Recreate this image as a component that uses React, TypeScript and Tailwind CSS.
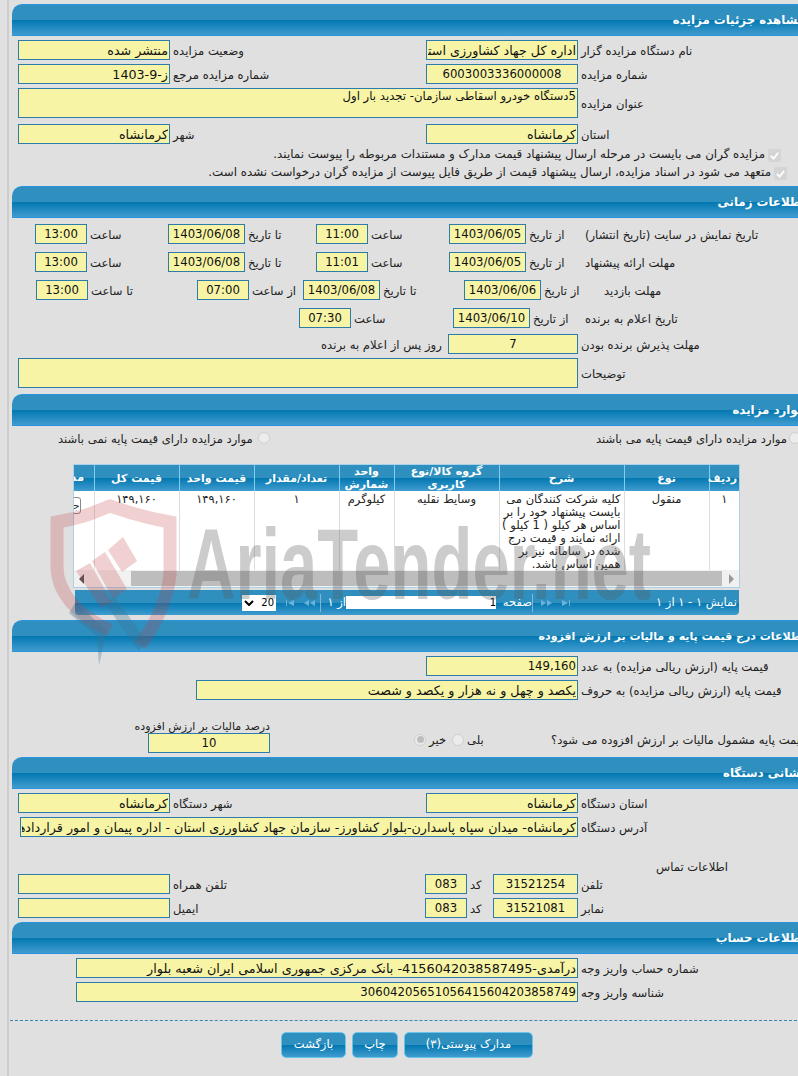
import type { ReactNode } from 'react';

const bar =
  'bg-[linear-gradient(to_bottom,#2f90c0_0%,#2f90c0_50%,#0277b0_50%,#409ccf_100%)]';

function Header({ title, size }: { title: string; size?: string }) {
  return (
    <div
      dir="rtl"
      className={`h-8 rounded-tl-[10px] border-t border-b border-[#2a93dd] pr-[7px] pt-[8px] leading-[15px] font-bold text-white ${size ?? 'text-[11.8px]'} ${bar}`}
    >
      {title}
    </div>
  );
}

function Field({
  value,
  w,
  center,
  ltr,
  size,
}: {
  value: string;
  w: string;
  center?: boolean;
  ltr?: boolean;
  size?: string;
}) {
  const fontSize = size ?? (center || ltr ? 'text-[11.7px]' : 'text-[12.7px]');
  return (
    <input
      readOnly
      dir={ltr ? 'ltr' : 'rtl'}
      value={value}
      className={`h-5 shrink-0 border border-[#2c7cab] bg-[#f7f5a5] px-[1px] text-[#111] outline-none ${fontSize} ${w} ${
        center ? 'text-center' : ltr ? 'text-right' : ''
      }`}
    />
  );
}

function Label({ children, w }: { children?: ReactNode; w?: string }) {
  return (
    <span
      dir="rtl"
      className={`mt-px block shrink-0 pl-[3px] text-left text-[11.6px] leading-5 whitespace-nowrap text-[#222] ${w ?? ''}`}
    >
      {children}
    </span>
  );
}

function Row({ className, children }: { className: string; children: ReactNode }) {
  return <div className={`flex h-5 items-center ${className}`}>{children}</div>;
}

function Check() {
  return (
    <span className="flex h-[13px] w-[13px] shrink-0 items-center justify-center rounded-[2px] bg-[#d4d4d4]">
      <svg viewBox="0 0 12 12" className="h-[11px] w-[11px]" fill="none" stroke="#fff" strokeWidth="2">
        <path d="M2 6.5 5 9.5 10 3" />
      </svg>
    </span>
  );
}

function Radio({ on }: { on?: boolean }) {
  return (
    <span className="flex h-3 w-3 shrink-0 items-center justify-center rounded-full border border-[#cfcfcf] bg-[#ececec]">
      {on && <span className="h-[7px] w-[7px] rounded-full bg-[#bdbdbd]" />}
    </span>
  );
}

function PagerIcon({ kind }: { kind: 'first' | 'prev' | 'next' | 'last' }) {
  const paths = {
    first: 'M1 1v6h1V1zM9 1 3 4l6 3z',
    prev: 'M6 1 1 4l5 3zM12 1 7 4l5 3z',
    next: 'M1 1l5 3-5 3zM7 1l5 3-5 3z',
    last: 'M1 1l6 3-6 3zM8 1v6h1V1z',
  };
  return (
    <svg viewBox="0 0 13 8" className="h-2 w-[13px] shrink-0" fill="#6db3d9">
      <path d={paths[kind]} />
    </svg>
  );
}

const th = 'border-l border-[#7fcdf0] px-[2px] text-center align-middle text-[11px] leading-[13px] font-bold text-white';
const cell = 'border-l border-[#ddd] pt-[2px] align-top text-[11.5px] leading-[13px] text-[#222]';
const td = `${cell} px-1 text-center`;

function AuctionTable() {
  return (
    <div className="mt-[18px] ml-[61px] w-[667px] border border-[#a9d2e8] bg-white">
      <div dir="rtl" className="h-[105px] overflow-hidden">
        <table className="w-[725px] table-fixed border-collapse">
          <colgroup>
            <col className="w-[30px]" />
            <col className="w-[85px]" />
            <col className="w-[125px]" />
            <col className="w-[105px]" />
            <col className="w-[55px]" />
            <col className="w-[85px]" />
            <col className="w-[75px]" />
            <col className="w-[85px]" />
            <col className="w-[80px]" />
          </colgroup>
          <thead>
            <tr className={`h-[26px] ${bar}`}>
              <th className={th}>ردیف</th>
              <th className={th}>نوع</th>
              <th className={th}>شرح</th>
              <th className={th}>گروه کالا/نوع کاربری</th>
              <th className={th}>واحد شمارش</th>
              <th className={th}>تعداد/مقدار</th>
              <th className={th}>قیمت واحد</th>
              <th className={th}>قیمت کل</th>
              <th className="border-l border-[#7fcdf0] pl-[20px] text-center text-[11px] font-bold text-white">مدیریت</th>
            </tr>
          </thead>
          <tbody>
            <tr className="h-[79px]">
              <td className={td}>۱</td>
              <td className={td}>منقول</td>
              <td className={`${cell} pr-[3px] text-right whitespace-nowrap`}>
                کلیه شرکت کنندگان می
                <br />
                بایست پیشنهاد خود را بر
                <br />
                اساس هر کیلو ( 1 کیلو )
                <br />
                ارائه نمایند و قیمت درج
                <br />
                شده در سامانه نیز بر
                <br />
                همین اساس باشد.
              </td>
              <td className={td}>وسایط نقلیه</td>
              <td className={td}>کیلوگرم</td>
              <td className={td}>۱</td>
              <td className={td}>۱۴۹,۱۶۰</td>
              <td className={td}>۱۴۹,۱۶۰</td>
              <td className={cell}>
                <button className="mt-[4px] mr-[13px] block h-[17px] w-[40px] rounded-[3px] border border-[#888] bg-white text-right text-[10px] leading-[15px]">
                  جزئیات
                </button>
              </td>
            </tr>
          </tbody>
        </table>
      </div>
      <div className="flex h-[17px] items-center bg-[#f1f1f1]">
        <span className="ml-[5px] h-0 w-0 border-y-[5px] border-r-[5px] border-y-transparent border-r-[#555]" />
        <span className="ml-[47px] h-[15px] w-[591px] bg-[#bdbdbd]" />
        <span className="ml-[7px] h-0 w-0 border-y-[5px] border-l-[5px] border-y-transparent border-l-[#999]" />
      </div>
    </div>
  );
}

function Pager() {
  return (
    <div
      className={`mt-[2px] ml-[63px] flex h-[25px] w-[664px] items-center rounded-b-[4px] pl-[167px] text-[11.5px] text-white ${bar}`}
    >
      <span className="flex h-4 w-[34px] shrink-0 items-center justify-between bg-white px-[2px] text-[10px] text-black">
        <svg viewBox="0 0 10 6" className="h-[6px] w-[10px]" fill="none" stroke="#000" strokeWidth="2">
          <path d="M1 1l4 4 4-4" />
        </svg>
        20
      </span>
      <span className="ml-[9px]"><PagerIcon kind="first" /></span>
      <span className="ml-[5px]"><PagerIcon kind="prev" /></span>
      <span className="ml-[4px] h-[18px] w-px shrink-0 bg-[#7fb6d4]" />
      <span dir="rtl" className="ml-[6px] w-[19px] shrink-0 whitespace-nowrap">از ۱</span>
      <input readOnly dir="rtl" value="1" className="h-[13px] w-[150px] shrink-0 bg-white text-[10px] text-black outline-none" />
      <span dir="rtl" className="ml-[4px] w-[32px] shrink-0 whitespace-nowrap">صفحه</span>
      <span className="h-[18px] w-px shrink-0 bg-[#7fb6d4]" />
      <span className="ml-[7px]"><PagerIcon kind="next" /></span>
      <span className="ml-[8px]"><PagerIcon kind="last" /></span>
      <span dir="rtl" className="ml-[82px] whitespace-nowrap">نمایش ۱ - ۱ از ۱</span>
    </div>
  );
}

function Watermark() {
  return (
    <div className="pointer-events-none absolute top-0 left-0 h-full w-full">
      <svg viewBox="0 0 140 180" className="absolute top-[495px] left-[45px] h-[180px] w-[140px]" fill="none">
        <path
          d="M65 135C30 120 12 95 12 72V27C45 22 55 14 65 11C80 16 95 22 125 27V80C122 105 110 130 95 150"
          stroke="#c23b3b"
          strokeOpacity=".24"
          strokeWidth="13"
        />
        <path d="M65 105 98 152" stroke="#3c6f8e" strokeOpacity=".3" strokeWidth="12" />
        <path d="M30 108 62 135 54 170 52 142 24 118z" fill="#3c6f8e" fillOpacity=".32" />
        <path
          d="M63 55 78 42 92 66 77 77zM47 66 60 57 82 94 68 104zM31 76 45 68 67 107 56 113z"
          fill="#c23b3b"
          fillOpacity=".24"
        />
      </svg>
      <span className="absolute top-[507px] left-[187px] origin-left scale-x-[.67] text-[100px] leading-[115px] font-bold whitespace-nowrap text-[#555]/30 [font-family:'Liberation_Sans',sans-serif]">
        AriaTender.net
      </span>
    </div>
  );
}

export default function App() {
  return (
    <div className="relative h-[1076px] w-[798px] overflow-hidden bg-[#e0e0e0] [font-family:'DejaVu_Sans',sans-serif]">
      <div className="ml-[7px] h-full w-[805px] border-l-2 border-[#cdcdcd] pt-1 pl-[3px]">
        <Header title="مشاهده جزئیات مزایده" />
        <Row className="mt-1 pl-[6px]">
          <Field w="w-[152px]" value="منتشر شده" />
          <Label w="w-[256px]">وضعیت مزایده</Label>
          <Field w="w-[152px]" value="اداره کل جهاد کشاورزی استان کرمانشاه" />
          <Label>نام دستگاه مزایده گزار</Label>
        </Row>
        <Row className="mt-1 pl-[6px]">
          <Field w="w-[152px]" value="ز-9-1403" />
          <Label w="w-[256px]">شماره مزایده مرجع</Label>
          <Field w="w-[152px]" value="6003003336000008" center />
          <Label>شماره مزایده</Label>
        </Row>
        <div className="mt-1 flex h-[30px] items-center pl-[6px]">
          <textarea
            readOnly
            dir="rtl"
            value="5دستگاه خودرو اسقاطی سازمان- تجدید بار اول"
            className="h-[30px] w-[560px] resize-none border border-[#2c7cab] bg-[#f7f5a5] px-[1px] text-[11.7px] leading-[14px] text-[#111] outline-none"
          />
          <Label>عنوان مزایده</Label>
        </div>
        <Row className="mt-[6px] pl-[6px]">
          <Field w="w-[152px]" value="کرمانشاه" />
          <Label w="w-[256px]">شهر</Label>
          <Field w="w-[152px]" value="کرمانشاه" />
          <Label>استان</Label>
        </Row>
        <div dir="rtl" className="mt-[4px] flex h-[14px] items-center gap-[3px] pr-[31px] text-[11.85px] whitespace-nowrap text-[#222]">
          <Check />
          مزایده گران می بایست در مرحله ارسال پیشنهاد قیمت مدارک و مستندات مربوطه را پیوست نمایند.
        </div>
        <div dir="rtl" className="mt-[4px] flex h-[14px] items-center gap-[3px] pr-[25px] text-[11.85px] whitespace-nowrap text-[#222]">
          <Check />
          متعهد می شود در اسناد مزایده، ارسال پیشنهاد قیمت از طریق فایل پیوست از مزایده گران درخواست نشده است.
        </div>

        <div className="mt-[6px]">
          <Header title="اطلاعات زمانی" />
        </div>
        <Row className="mt-[6px] pl-[23px]">
          <Field w="w-[52px]" value="13:00" center />
          <Label w="w-[81px]">ساعت</Label>
          <Field w="w-[77px]" value="1403/06/08" center />
          <Label w="w-[71px]">تا تاریخ</Label>
          <Field w="w-[52px]" value="11:00" center />
          <Label w="w-[81px]">ساعت</Label>
          <Field w="w-[77px]" value="1403/06/05" center />
          <Label w="w-[56px]">از تاریخ</Label>
          <Label>تاریخ نمایش در سایت (تاریخ انتشار)</Label>
        </Row>
        <Row className="mt-2 pl-[23px]">
          <Field w="w-[52px]" value="13:00" center />
          <Label w="w-[81px]">ساعت</Label>
          <Field w="w-[77px]" value="1403/06/08" center />
          <Label w="w-[71px]">تا تاریخ</Label>
          <Field w="w-[52px]" value="11:01" center />
          <Label w="w-[81px]">ساعت</Label>
          <Field w="w-[77px]" value="1403/06/05" center />
          <Label w="w-[56px]">از تاریخ</Label>
          <Label>مهلت ارائه پیشنهاد</Label>
        </Row>
        <Row className="mt-2 pl-[24px]">
          <Field w="w-[52px]" value="13:00" center />
          <Label w="w-[109px]">تا ساعت</Label>
          <Field w="w-[52px]" value="07:00" center />
          <Label w="w-[54px]">از ساعت</Label>
          <Field w="w-[77px]" value="1403/06/08" center />
          <Label w="w-[84px]">تا تاریخ</Label>
          <Field w="w-[77px]" value="1403/06/06" center />
          <Label w="w-[60px]">از تاریخ</Label>
          <Label>مهلت بازدید</Label>
        </Row>
        <Row className="mt-2 pl-[287px]">
          <Field w="w-[52px]" value="07:30" center />
          <Label w="w-[102px]">ساعت</Label>
          <Field w="w-[77px]" value="1403/06/10" center />
          <Label w="w-[52px]">از تاریخ</Label>
          <Label>تاریخ اعلام به برنده</Label>
        </Row>
        <Row className="mt-[6px] pl-[306px]">
          <Label w="w-[130px]">روز پس از اعلام به برنده</Label>
          <Field w="w-[130px]" value="7" center />
          <Label>مهلت پذیرش برنده بودن</Label>
        </Row>
        <div className="mt-1 flex h-[30px] items-center pl-[6px]">
          <textarea readOnly className="h-[30px] w-[560px] resize-none border border-[#2c7cab] bg-[#f7f5a5] outline-none" />
          <Label>توضیحات</Label>
        </div>

        <div className="mt-[6px]">
          <Header title="موارد مزایده" />
        </div>
        <div className="mt-1 flex h-4 items-center pl-[43px]">
          <Label w="w-[203px]">موارد مزایده دارای قیمت پایه نمی باشند</Label>
          <Radio />
          <span className="w-[323px]" />
          <Label w="w-[196px]">موارد مزایده دارای قیمت پایه می باشند</Label>
          <Radio />
        </div>
        <AuctionTable />
        <Pager />

        <div className="mt-[5px]">
          <Header size="text-[11px]" title="اطلاعات درج قیمت پایه و مالیات بر ارزش افزوده" />
        </div>
        <Row className="mt-1 pl-[414px]">
          <Field w="w-[152px]" value="149,160" ltr />
          <Label>قیمت پایه (ارزش ریالی مزایده) به عدد</Label>
        </Row>
        <Row className="mt-1 pl-[184px]">
          <Field w="w-[382px]" value="یکصد و چهل و نه هزار و یکصد و شصت" />
          <Label>قیمت پایه (ارزش ریالی مزایده) به حروف</Label>
        </Row>
        <div className="mt-[21px] flex h-8 items-start pl-[123px]">
          <div className="flex w-[135px] shrink-0 flex-col items-end">
            <span dir="rtl" className="h-3 text-[11px] leading-3 whitespace-nowrap text-[#222]">
              درصد مالیات بر ارزش افزوده
            </span>
            <Field w="w-[122px]" value="10" center />
          </div>
          <div className="mt-[8px] flex items-center">
            <span className="w-[144px]" />
            <Radio on />
            <Label w="w-[26px]">خیر</Label>
            <Radio />
            <Label w="w-[84px]">بلی</Label>
            <Label>قیمت پایه مشمول مالیات بر ارزش افزوده می شود؟</Label>
          </div>
        </div>

        <div className="mt-1">
          <Header title="نشانی دستگاه" />
        </div>
        <Row className="mt-1 pl-[6px]">
          <Field w="w-[152px]" value="کرمانشاه" />
          <Label w="w-[256px]">شهر دستگاه</Label>
          <Field w="w-[152px]" value="کرمانشاه" />
          <Label>استان دستگاه</Label>
        </Row>
        <Row className="mt-1 pl-[8px]">
          <Field
            w="w-[558px]"
            value="کرمانشاه- میدان سپاه پاسدارن-بلوار کشاورز- سازمان جهاد کشاورزی استان - اداره پیمان و امور قراردادها"
          />
          <Label>آدرس دستگاه</Label>
        </Row>
        <div className="mt-[20px] h-[14px] pl-[641px]">
          <Label>اطلاعات تماس</Label>
        </div>
        <Row className="mt-[3px] pl-[6px]">
          <Field w="w-[152px]" value="" />
          <Label w="w-[255px]">تلفن همراه</Label>
          <Field w="w-[42px]" value="083" center />
          <Label w="w-[26px]">کد</Label>
          <Field w="w-[85px]" value="31521254" center />
          <Label>تلفن</Label>
        </Row>
        <Row className="mt-1 pl-[6px]">
          <Field w="w-[152px]" value="" />
          <Label w="w-[255px]">ایمیل</Label>
          <Field w="w-[42px]" value="083" center />
          <Label w="w-[26px]">کد</Label>
          <Field w="w-[85px]" value="31521081" center />
          <Label>نمابر</Label>
        </Row>

        <div className="mt-1">
          <Header title="اطلاعات حساب" />
        </div>
        <Row className="mt-1 pl-[64px]">
          <Field w="w-[502px]" size="text-[12.8px]" value="درآمدی-4156042038587495- بانک مرکزی جمهوری اسلامی ایران شعبه بلوار" />
          <Label>شماره حساب واریز وجه</Label>
        </Row>
        <Row className="mt-1 pl-[64px]">
          <Field w="w-[502px]" value="30604205651056415604203858749" ltr />
          <Label>شناسه واریز وجه</Label>
        </Row>

        <div className="mt-[18px] -ml-[2px] border-t border-dashed border-[#3c84ab]" />
        <div className="mt-[11px] flex gap-[6px] pl-[269px]">
          {[
            ['بازگشت', 'w-[65px]'],
            ['چاپ', 'w-[46px]'],
            ['مدارک پیوستی(۳)', 'w-[129px]'],
          ].map(([text, w]) => (
            <button
              key={text}
              dir="rtl"
              className={`h-[26px] rounded-[5px] border border-[#6cc3ea] text-[11.5px] text-white ${bar} ${w}`}
            >
              {text}
            </button>
          ))}
        </div>
      </div>
      <Watermark />
    </div>
  );
}
